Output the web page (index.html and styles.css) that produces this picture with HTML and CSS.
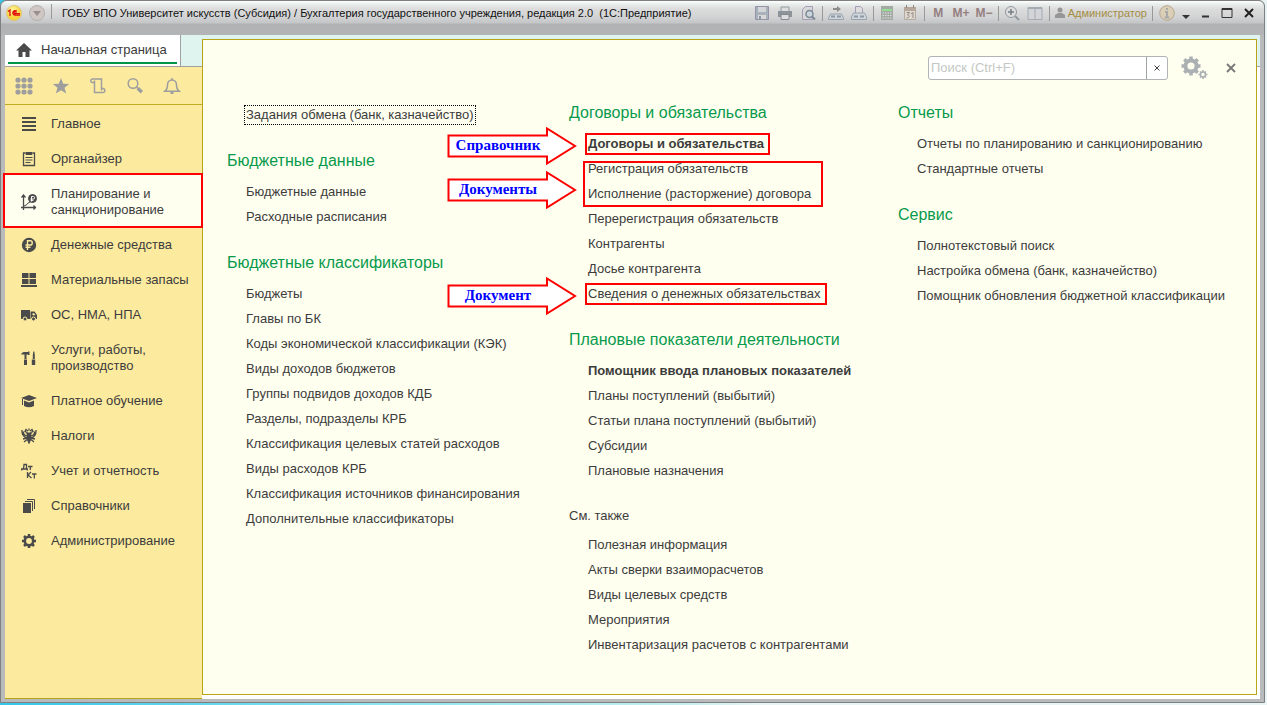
FILE: index.html
```html
<!DOCTYPE html>
<html lang="ru">
<head>
<meta charset="utf-8">
<title>1С:Предприятие</title>
<link rel="stylesheet" href="styles.css">
</head>
<body>
<div class="window">
  <header class="titlebar">
    <svg class="logo" viewBox="0 0 18 18" aria-hidden="true"><defs><radialGradient id="g" cx=".4" cy=".3"><stop offset="0" stop-color="#fff8a0"/><stop offset="1" stop-color="#f6d33c"/></radialGradient></defs><circle cx="9" cy="9" r="7.5" fill="url(#g)" stroke="#d8c070" stroke-width=".8"/><path d="M3 7.500l2-1.500v6M11.800 7.300a2.300 2.300 0 1 0-1.600 3.900h4.800M11.200 8.700a1 1 0 1 0-.7 1h4.500" fill="none" stroke="#e01010" stroke-width="1.300"/></svg>
    <button class="menu-btn" aria-label="Главное меню"><svg viewBox="0 0 18 18"><circle cx="9" cy="9" r="7.500" fill="#cfc8c4" stroke="#b5afac"/><path d="M5 7h8l-4 5z" fill="#9b8f8d"/></svg></button>
    <span class="sep first"></span>
    <h1 class="title">ГОБУ ВПО Университет искусств (Субсидия) / Бухгалтерия государственного учреждения, редакция 2.0&nbsp; (1С:Предприятие)</h1>
    <div class="tools">
      <button class="tool" aria-label="Сохранить"><svg viewBox="0 0 16 16"><path d="M1.500 1.500h13v13h-13z" fill="#a9b1ba" stroke="#9692a8"/><path d="M4 2h8v5H4z" fill="#d4d6d8"/><path d="M4 10h8v4H4z" fill="#d8d8d8"/><path d="M5 11h2v3H5z" fill="#8f98a2"/></svg></button>
      <button class="tool" aria-label="Печать"><svg viewBox="0 0 16 16"><path d="M4 6V2h8v4" fill="#ddd" stroke="#939aa0"/><path d="M1 6h14v6H1z" fill="#8d9499"/><path d="M4 9.500h8v5H4z" fill="#ddd" stroke="#838a90"/></svg></button>
      <button class="tool" aria-label="Предварительный просмотр"><svg viewBox="0 0 16 16"><path d="M2.500 14.500v-10l3-3h7v13z" fill="#d9d9d9" stroke="#a59db5"/><circle cx="9.500" cy="9" r="3.500" fill="#cdd5dc" stroke="#7c8997" stroke-width="1.500"/><path d="M12 11.500l3 3" stroke="#7c8997" stroke-width="2"/></svg></button>
      <span class="sep"></span>
      <button class="tool" aria-label="Получить ссылку"><svg viewBox="0 0 16 16"><path d="M5 3h4V1l4 3-4 3V5H5z" fill="#8d8d8d"/><path d="M2.500 9h11l2 4v1.500H.500V13z" fill="#cfd5db" stroke="#9aa3ad"/><path d="M3 11.500h4M9 11.500h4" stroke="#8c98a4" stroke-width="2"/></svg></button>
      <button class="tool" aria-label="Перейти по ссылке"><svg viewBox="0 0 16 16"><path d="M4.500 8V1.500h5l2 2V8" fill="#ddd" stroke="#a59db5"/><path d="M2.500 8h11l2 4v2.500H.500V12z" fill="#cfd5db" stroke="#9aa3ad"/><path d="M3 11.500h4M9 11.500h4" stroke="#8c98a4" stroke-width="2"/></svg></button>
      <span class="sep"></span>
      <button class="tool" aria-label="Калькулятор"><svg viewBox="0 0 16 16"><path d="M2 1h12v14H2z" fill="#a3aaa3"/><path d="M3 5h10" stroke="#90ee90" stroke-width="1.500"/><path d="M3.500 8h9M3.500 10.500h9M3.500 13h9" stroke="#e0e0e0" stroke-dasharray="1.500 1"/></svg></button>
      <button class="tool" aria-label="Календарь"><svg viewBox="0 0 16 16"><path d="M2.500 2.500h11v12h-11z" fill="#ddd8d0" stroke="#b5aaa0"/><path d="M2 2h12v4H2z" fill="#b7a79b"/><path d="M4.500 0v3M11.500 0v3" stroke="#8f8580"/><path d="M4.500 7.500h3l-2 2.500c3 0 2 3-1 3M9 9l2-1.500V13" fill="none" stroke="#9a8a80"/></svg></button>
      <span class="sep"></span>
      <button class="tool mem">M</button>
      <button class="tool mem">M+</button>
      <button class="tool mem">M−</button>
      <span class="sep"></span>
      <button class="tool" aria-label="Масштаб"><svg viewBox="0 0 16 16"><circle cx="7" cy="7" r="5.500" fill="#ddd" stroke="#92999f"/><path d="M4 7h6M7 4v6" stroke="#777e85" stroke-width="1.500"/><path d="M11 11l4 4" stroke="#92999f" stroke-width="2"/></svg></button>
      <button class="tool" aria-label="Разделить окно"><svg viewBox="0 0 16 16"><path d="M1 2.500h14v12H1zM8 2v12" fill="#d2d4d7" stroke="#a4abb3"/><path d="M1 3h14" stroke="#a4abb3" stroke-width="2"/></svg></button>
      <span class="sep"></span>
      <button class="user"><svg viewBox="0 0 10 12"><circle cx="5" cy="3" r="2.500" fill="#969696"/><path d="M0 11V8l3-2h4l3 2v3z" fill="#969696"/></svg>Администратор</button>
      <span class="sep"></span>
      <button class="tool" aria-label="О программе"><svg viewBox="0 0 16 16"><circle cx="8" cy="8" r="7.300" fill="#dccfb8" stroke="#b7a88e"/><path d="M8 3v2M6 7h2v5M5.500 12.500h5" fill="none" stroke="#aaa" stroke-width="2"/></svg></button>
      <button class="drop" aria-label="Ещё"><svg viewBox="0 0 10 12"><path d="M1 8h8l-4 4z" fill="#333"/></svg></button>
      <button class="win" aria-label="Свернуть"><svg viewBox="0 0 12 12"><path d="M3 9.500h7" stroke="#333" stroke-width="2"/></svg></button>
      <button class="win" aria-label="Развернуть"><svg viewBox="0 0 12 12"><path d="M1 1.500h10v9H1z" fill="none" stroke="#333"/><path d="M1 2h10" stroke="#333" stroke-width="2"/></svg></button>
      <button class="win" aria-label="Закрыть"><svg viewBox="0 0 12 12"><path d="M2 2l8 8M10 2l-8 8" stroke="#222" stroke-width="2"/></svg></button>
    </div>
  </header>
  <div class="work">
    <aside class="left">
      <a class="tab" href="#"><span class="tab-in"><svg viewBox="0 0 16 14"><path d="M8 0l8 7.500h-2.500V14H9.500V9h-3v5H2.500V7.500H0z" fill="#4a4a4a"/></svg>Начальная страница</span></a>
      <div class="side">
        <div class="quick">
          <button aria-label="Меню функций"><svg viewBox="0 0 18 18" fill="#9e9e9e"><circle cx="3" cy="3" r="2.600"/><circle cx="9" cy="3" r="2.600"/><circle cx="15" cy="3" r="2.600"/><circle cx="3" cy="9" r="2.600"/><circle cx="9" cy="9" r="2.600"/><circle cx="15" cy="9" r="2.600"/><circle cx="3" cy="15" r="2.600"/><circle cx="9" cy="15" r="2.600"/><circle cx="15" cy="15" r="2.600"/></svg></button>
          <button aria-label="Избранное"><svg viewBox="0 0 18 18"><path d="M9 1l2.200 5.700 6 .200-4.700 3.800 1.700 5.900L9 13.200l-5.200 3.400 1.700-5.900L.800 6.900l6-.200z" fill="#9e9e9e"/></svg></button>
          <button aria-label="История"><svg viewBox="0 0 18 18" fill="none" stroke="#9e9e9e" stroke-width="1.500"><path d="M4 2h8.500v10M5.500 3.500v12h9M4 2a1.800 1.800 0 1 0 0 3.500h1.500M14 15.500a2 2 0 1 0-1.500-3.500v1.500"/></svg></button>
          <button aria-label="Поиск"><svg viewBox="0 0 18 18" fill="none" stroke="#9e9e9e"><circle cx="7" cy="6.500" r="4.800" stroke-width="1.500"/><path d="M10.500 10l1.500 1.500" stroke-width="1.500"/><path d="M11.800 11.300l4 4" stroke-width="3.500"/></svg></button>
          <button aria-label="Уведомления"><svg viewBox="0 0 18 18" fill="none" stroke="#9e9e9e" stroke-width="1.500"><path d="M2 14.200c2-1.500 2.500-3 2.500-6.200 0-3 2-5 4.500-5s4.500 2 4.500 5c0 3.200.500 4.700 2.500 6.200zM9 1v2"/><path d="M7.500 16h3" stroke-width="2"/></svg></button>
        </div>
        <nav class="nav">
          <a href="#"><svg viewBox="0 0 16 16"><path d="M1 2h14M1 6h14M1 10h14M1 14h14" stroke="#4a4a4a" stroke-width="2"/></svg>Главное</a>
          <a href="#"><svg viewBox="0 0 16 16" fill="none" stroke="#4a4a4a"><path d="M4.500 2h-2v12.500h11V2h-2" stroke-width="1.300"/><path d="M5 1.500h6v2H5z" fill="#4a4a4a"/><path d="M4.500 6.500h7M4.500 9h7M4.500 11.500h5"/></svg>Органайзер</a>
          <a href="#" class="active"><svg viewBox="0 0 16 16" fill="none" stroke="#4a4a4a"><path d="M2.500 16V1M0 13.500h15M.500 3.500l2-2.500 2 2.500M12.500 11.500l2 2-2 2" stroke-width="1.300"/><path d="M3 12l3-1.500 1-1.500 3-1.500"/><circle cx="11.500" cy="4.500" r="4" fill="#4a4a4a"/><path d="M10.500 7.500v-5h2c1.500 0 1.500 2.500 0 2.500h-3M9.500 6.300h3" stroke="#fff"/></svg>Планирование и санкционирование</a>
          <a href="#"><svg viewBox="0 0 16 16"><circle cx="8" cy="8" r="7.200" fill="#4a4a4a"/><path d="M6.500 13V3.800h2.800c2.600 0 2.600 4.200 0 4.200H4.500M4.500 10.300h5" fill="none" stroke="#fdeca0" stroke-width="1.400"/></svg>Денежные средства</a>
          <a href="#"><svg viewBox="0 0 16 16" fill="#4a4a4a"><path d="M1 1h6.500v5H1zM8.500 1H15v5H8.500zM1 7h6.500v5H1zM8.500 7H15v5H8.500zM0 13h16v2H0z"/></svg>Материальные запасы</a>
          <a href="#"><svg viewBox="0 0 16 16"><path d="M0 3h9v9H0zM9.500 4.500h4L16 8v4H9.500z" fill="#4a4a4a"/><path d="M11.500 6.200h1.700l1.300 2h-3z" fill="#fdeca0"/><g fill="#4a4a4a" stroke="#fdeca0"><circle cx="4" cy="12" r="2"/><circle cx="12.500" cy="12" r="2"/></g></svg>ОС, НМА, НПА</a>
          <a href="#"><svg viewBox="0 0 16 16"><path d="M0 4.500C1 2.500 2 2 4 2h3v-.500h1.500v3.500H7v-.500H5.500V9h-2V4.500zM3 9.500h3v5.500H3zM11.800 9V5l.500-3.500h1l.500 3.500v4zM10.800 9.500h3.400v5.500h-3.400z" fill="#4a4a4a"/></svg>Услуги, работы, производство</a>
          <a href="#"><svg viewBox="0 0 16 16"><path d="M0 5l8-3 8 3-8 3zM3 7.500l5 2 5-2V13q-5 2.500-10 0zM1 6h1v6H1z" fill="#4a4a4a"/></svg>Платное обучение</a>
          <a href="#"><svg viewBox="0 0 16 16" fill="none" stroke="#4a4a4a"><path d="M8 .500v2M7 3L5 1.500 4 3.500l2 1v2M9 3l2-1.500 1 2-2 1v2" stroke-width="1.300"/><path d="M6.500 5v7L8 15.500 9.500 12V5z" fill="#4a4a4a"/><path d="M1 2q-.500 6 5 8M2.500 3.500Q2 7 6 8M15 2q.500 6-5 8M13.500 3.500Q14 7 10 8M6 10l-4 1M10 10l4 1M6 11.500L3 14M10 11.500l3 2.500" stroke-width="1.300"/></svg>Налоги</a>
          <a href="#"><svg viewBox="0 0 16 16" fill="none" stroke="#4a4a4a" stroke-width="1.300"><path d="M.700 7.500V6h5.600v1.500M2 6q1-1 1-4.500h2.500V6M7 3.500h4.500M9.300 3.500V7M6.500 9v6M10 9L7 12l3.500 3M11 11h4.500M13.300 11v4.500"/></svg>Учет и отчетность</a>
          <a href="#"><svg viewBox="0 0 16 16"><path d="M2 5h8v10H2z" fill="#4a4a4a"/><path d="M4 3.500h7.500V13M6 1.500h7.500V11" fill="none" stroke="#4a4a4a"/></svg>Справочники</a>
          <a href="#"><svg viewBox="0 0 16 16" fill="none" stroke="#4a4a4a"><circle cx="8" cy="8" r="4.200" stroke-width="2.600"/><path d="M8 1v2M8 13v2M1 8h2M13 8h2M3 3l1.500 1.500M11.500 11.500L13 13M13 3l-1.500 1.500M4.500 11.500L3 13" stroke-width="2.500"/></svg>Администрирование</a>
        </nav>
      </div>
    </aside>
    <main class="panel">
      <div class="bar">
        <div class="search"><input type="text" placeholder="Поиск (Ctrl+F)" aria-label="Поиск"><button aria-label="Очистить"><svg viewBox="0 0 6 6"><path d="M.500 .500l5 5M5.500 .500l-5 5" stroke="#444"/></svg></button></div>
        <button class="gear" aria-label="Настройки"><svg viewBox="0 0 27 24" fill="none" stroke="#abb0b2"><circle cx="10" cy="10" r="5.600" stroke-width="4"/><path d="M10 .500v3M10 16.500v3M.500 10h3M16.500 10h3M3.300 3.300l2.200 2.200M14.500 14.500l2.200 2.200M16.700 3.300l-2.200 2.200M5.500 14.500l-2.200 2.200" stroke-width="3.500"/><circle cx="22" cy="18.500" r="2.500" stroke-width="1.600"/><path d="M22 14v2M22 21v2M17.500 18.500h2M24.500 18.500h2M19 15.500l1 1M24 20.500l1 1M25 15.500l-1 1M20 20.500l-1 1" stroke-width="1.600"/></svg></button>
        <button class="close" aria-label="Закрыть"><svg viewBox="0 0 10 10"><path d="M1 1l8 8M9 1l-8 8" stroke="#777" stroke-width="1.800"/></svg></button>
      </div>
      <div class="cols">
        <div class="col lower">
          <section><ul><li><a href="#" class="focus">Задания обмена (банк, казначейство)</a></li></ul></section>
          <section><h2>Бюджетные данные</h2><ul>
            <li><a href="#">Бюджетные данные</a></li><li><a href="#">Расходные расписания</a></li></ul></section>
          <section><h2>Бюджетные классификаторы</h2><ul>
            <li><a href="#">Бюджеты</a></li><li><a href="#">Главы по БК</a></li><li><a href="#">Коды экономической классификации (КЭК)</a></li><li><a href="#">Виды доходов бюджетов</a></li><li><a href="#">Группы подвидов доходов КДБ</a></li><li><a href="#">Разделы, подразделы КРБ</a></li><li><a href="#">Классификация целевых статей расходов</a></li><li><a href="#">Виды расходов КРБ</a></li><li><a href="#">Классификация источников финансирования</a></li><li><a href="#">Дополнительные классификаторы</a></li></ul></section>
        </div>
        <div class="col">
          <section><h2>Договоры и обязательства</h2><ul>
            <li><a href="#" class="strong marked">Договоры и обязательства</a><svg class="arrow" viewBox="0 0 130 38"><path d="M1.500 8.500H100v-7L128 19l-28 17.500v-7H1.500z"/><text x="51" y="23">Справочник</text></svg></li>
            <li><span class="frame"></span><a href="#">Регистрация обязательств</a><svg class="arrow pair" viewBox="0 0 130 38"><path d="M1.500 8.500H100v-7L128 19l-28 17.500v-7H1.500z"/><text x="51" y="23">Документы</text></svg></li>
            <li><a href="#">Исполнение (расторжение) договора</a></li>
            <li><a href="#">Перерегистрация обязательств</a></li><li><a href="#">Контрагенты</a></li><li><a href="#">Досье контрагента</a></li>
            <li><a href="#" class="marked">Сведения о денежных обязательствах</a><svg class="arrow" viewBox="0 0 130 38"><path d="M1.500 8.500H100v-7L128 19l-28 17.500v-7H1.500z"/><text x="51" y="23">Документ</text></svg></li></ul></section>
          <section><h2>Плановые показатели деятельности</h2><ul>
            <li><a href="#" class="strong">Помощник ввода плановых показателей</a></li><li><a href="#">Планы поступлений (выбытий)</a></li><li><a href="#">Статьи плана поступлений (выбытий)</a></li><li><a href="#">Субсидии</a></li><li><a href="#">Плановые назначения</a></li></ul></section>
          <section class="also"><h3>См. также</h3><ul>
            <li><a href="#">Полезная информация</a></li><li><a href="#">Акты сверки взаиморасчетов</a></li><li><a href="#">Виды целевых средств</a></li><li><a href="#">Мероприятия</a></li><li><a href="#">Инвентаризация расчетов с контрагентами</a></li></ul></section>
        </div>
        <div class="col">
          <section><h2>Отчеты</h2><ul><li><a href="#">Отчеты по планированию и санкционированию</a></li><li><a href="#">Стандартные отчеты</a></li></ul></section>
          <section><h2>Сервис</h2><ul><li><a href="#">Полнотекстовый поиск</a></li><li><a href="#">Настройка обмена (банк, казначейство)</a></li><li><a href="#">Помощник обновления бюджетной классификации</a></li></ul></section>
        </div>
      </div>
    </main>
  </div>
</div>
</body>
</html>
```
FILE: styles.css
```css
* { box-sizing: border-box; }
body {
  margin: 0;
  min-height: 100vh;
  display: flex;
  padding: 0 2px 2px 0;
  background: linear-gradient(90deg, #35c5e8, #8ce6f2 30%, #c5eeee 54%, #e8f4f4 60%);
  font: 13px/16px "Liberation Sans", Arial, sans-serif;
  color: #3c3c3c;
}
a { color: inherit; text-decoration: none; }
button { border: 0; padding: 0; background: none; font: inherit; color: inherit; }
button, a { cursor: pointer; }
svg { display: block; }

.window {
  flex: 1;
  min-width: 0;
  display: flex;
  flex-direction: column;
  border: 1px solid #808080;
  border-radius: 6px 6px 0 0;
  padding: 0 4px 3px;
  background: #b9babb;
}
.titlebar {
  display: flex;
  align-items: flex-start;
  height: 34px;
  margin: 0 -4px;
  padding: 3px 4px 0;
  border-radius: 6px 6px 0 0;
  background: linear-gradient(#fff 0, #e9efed 3px, #dcdcdc 8px, #d2d3d4 16px, #c4c5c6 22px, #b0b2b3 23px, #b2b4b5 34px);
}
.logo, .menu-btn svg { width: 18px; height: 18px; }
.menu-btn { margin-left: 5px; }
.sep { width: 1px; height: 15px; margin: 0 2px; background: #999; }
.sep.first { margin: 0 10px 0 5px; }
.title {
  flex: 1;
  min-width: 0;
  margin: 1px 0 0;
  overflow: hidden;
  white-space: nowrap;
  font-size: 11px;
  font-weight: 400;
  color: #111;
}
.tools { display: flex; align-items: center; height: 18px; }
.tool { width: 23px; display: flex; justify-content: center; }
.tool svg { width: 16px; height: 16px; }
.mem { font-size: 12px; font-weight: 700; color: #958080; }
.user { display: flex; align-items: center; gap: 3px; padding: 0 3px; font-size: 11px; color: #a38d43; }
.user svg { width: 10px; height: 12px; }
.drop { width: 16px; }
.drop svg { width: 10px; height: 12px; margin: auto; }
.win { width: 22px; }
.win svg { width: 12px; height: 12px; margin: auto; }

.work {
  flex: 1;
  display: grid;
  grid-template-columns: 197px minmax(0, 1fr);
  background: linear-gradient(#dff4ef 31px, #a0a0a0 31px, #a0a0a0 32px, #fff 32px);
}
.left { display: flex; flex-direction: column; }
.tab {
  width: 176px;
  height: 31px;
  padding: 0 3px;
  border-right: 1px solid #a0a0a0;
  background: #fff;
}
.tab-in { display: flex; align-items: center; gap: 9px; height: 29px; padding: 3px 0 0 8px; border-bottom: 2px solid #009646; }
.tab svg { width: 16px; height: 14px; }
.side {
  flex: 1;
  margin-top: 1px;
  background: #fceb9f;
  border-bottom: 1px solid #b8a418;
}
.quick { display: flex; gap: 19px; height: 38px; padding-left: 10px; border-bottom: 1px solid #c0ab20; }
.quick svg { width: 18px; height: 18px; }
.nav a { display: flex; align-items: center; gap: 14px; min-height: 35px; padding: 2px 12px 0 16px; }
.nav a:nth-child(7) { min-height: 51px; }
.nav svg { flex: none; width: 16px; height: 16px; }
.nav .active { min-height: 51px; margin-right: 1px; padding-right: 11px; background: #fffff0; outline: 2px solid #f00; position: relative; z-index: 2; }

.panel { margin: 4px 3px 4px 0; border: 1px solid #b8a418; background: #fffff0; }
.bar { display: flex; align-items: center; justify-content: flex-end; padding: 16px 20px 0 0; height: 40px; }
.search { display: flex; width: 240px; height: 24px; border: 1px solid #b0b4b4; border-radius: 3px; background: #fff; }
.search input { flex: 1; min-width: 0; border: 0; padding: 1px 2px; background: none; font: inherit; outline: 0; }
.search input::placeholder { color: #c4c8c4; opacity: 1; }
.search button { width: 21px; border-left: 1px solid #a0a4a4; }
.search button svg { width: 6px; height: 6px; margin: auto; }
.gear { margin-left: 13px; }
.gear svg { width: 27px; height: 24px; }
.close { margin-left: 18px; }
.close svg { width: 10px; height: 10px; }

.cols { display: grid; grid-template-columns: 342px 329px minmax(0, 1fr); padding: 20px 0 0 24px; }
.lower { padding-top: 2px; }
section + section { margin-top: 21px; }
section + .also { margin-top: 20px; }
h2 { margin: 0 0 6px; font-size: 16px; line-height: 25px; font-weight: 400; color: #089a4c; }
h3 { margin: 0 0 4px; font-size: 13px; line-height: 25px; font-weight: 400; }
ul { margin: 0; padding: 0 0 0 19px; list-style: none; }
li { position: relative; line-height: 25px; white-space: nowrap; }
.col li a { display: inline-block; line-height: 16px; }
.strong { font-weight: 700; }
.focus { outline: 1px dotted #000; outline-offset: 1px; }
.col li .marked { padding-right: 3px; outline: 2px solid #f00; outline-offset: 1px; }
.frame { position: absolute; left: -5px; top: 5px; width: 240px; height: 46px; border: 2px solid #f00; }
.arrow { position: absolute; left: -141px; top: -4px; width: 130px; height: 38px; }
.arrow.pair { top: 15px; }
.arrow path { fill: #fff; stroke: #f00; stroke-width: 2; }
.arrow text { font: 700 15px "Liberation Serif", "Times New Roman", serif; fill: #00f; text-anchor: middle; }
```
